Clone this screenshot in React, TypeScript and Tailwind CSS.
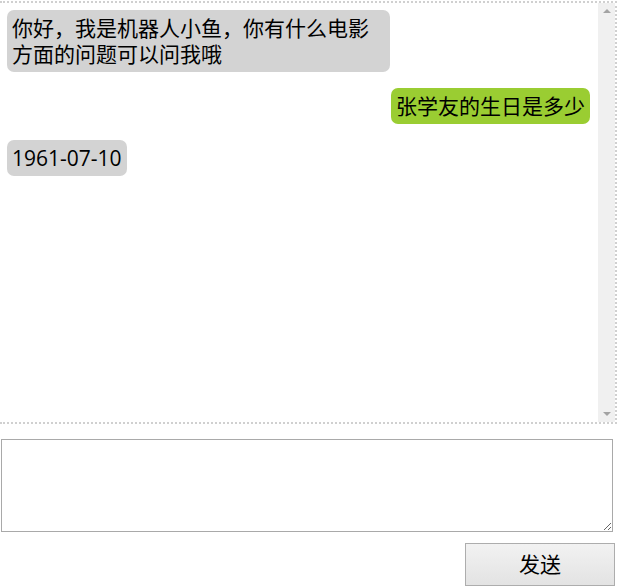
import React from "react";

const font = { fontFamily: '"Open Sans", "Noto Sans CJK SC", sans-serif' };

type Msg = { id: number; from: "bot" | "me"; text: string };

const messages: Msg[] = [
  { id: 1, from: "bot", text: "你好，我是机器人小鱼，你有什么电影方面的问题可以问我哦" },
  { id: 2, from: "me", text: "张学友的生日是多少" },
  { id: 3, from: "bot", text: "1961-07-10" },
];

export default function App() {
  return (
    <div className="w-[617px] h-[587px] bg-white text-black" style={font}>
      {/* Chat window */}
      <div className="mt-px h-[423px] flex border-t-2 border-r-2 border-b-2 border-dotted border-[#d0d0d0]">
        <div className="flex-1 flex flex-col gap-4 pt-[7px] pl-[7px] pr-[8px]">
          {messages.map((m) => (
            <div
              key={m.id}
              className={m.from === "me" ? "flex justify-end" : "flex justify-start"}
            >
              <div
                className={
                  "max-w-[383px] rounded-[7px] px-[5px] py-[5px] text-[21px] leading-[26px] " +
                  (m.from === "me" ? "bg-[#9acd32]" : "bg-[#d3d3d3]")
                }
              >
                {m.text}
              </div>
            </div>
          ))}
        </div>

        {/* Scrollbar */}
        <div className="w-[17px] bg-[#f0f0f0] flex flex-col items-center justify-between pt-[6px] pb-[6px]">
          <div className="w-0 h-0 border-l-[4px] border-r-[4px] border-b-[4px] border-l-transparent border-r-transparent border-b-[#a3a3a3]" />
          <div className="w-0 h-0 border-l-[4px] border-r-[4px] border-t-[4px] border-l-transparent border-r-transparent border-t-[#a3a3a3]" />
        </div>
      </div>

      {/* Input */}
      <div className="pt-[15px] pl-px">
        <textarea className="block w-[612px] h-[93px] border border-[#a9a9a9] bg-white outline-none resize" />
      </div>

      <div className="flex justify-end pt-[11px] pr-[2px]">
        <button className="w-[150px] h-[43px] border border-[#adadad] bg-gradient-to-b from-[#f2f2f2] to-[#e3e3e3] text-[21px] text-black">
          发送
        </button>
      </div>
    </div>
  );
}
